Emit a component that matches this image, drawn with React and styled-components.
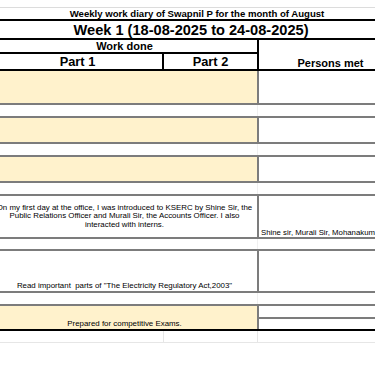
import React from "react";
import styled, { createGlobalStyle } from "styled-components";

const Global = createGlobalStyle`
  html, body {
    margin: 0;
    padding: 0;
    background: #fff;
    overflow: hidden;
  }
`;

const YELLOW = "#fff2cc";
const GRAY = "#7c7c7c";
const FAINT = "#e6e6e6";

// sheet is scrolled a little, so the first column starts off screen
const Sheet = styled.div`
  margin-left: -8px;
  width: 410px;
  padding-top: 7px;
  font-family: "Liberation Sans", Arial, sans-serif;
  color: #000;
`;

const TitleRow = styled.div`
  box-sizing: border-box;
  height: 14px;
  border-top: 1px solid #dcdcdc;
  border-bottom: 2px solid #000;
  display: flex;
  align-items: center;
  justify-content: center;
  font-size: 9.6px;
  font-weight: bold;
  white-space: nowrap;
`;

const WeekRow = styled.div`
  box-sizing: border-box;
  height: 19px;
  border-bottom: 2px solid #000;
  display: flex;
  align-items: center;
  justify-content: center;
  padding-right: 12px;
  font-size: 14.6px;
  font-weight: bold;
  white-space: nowrap;
`;

const HeadGrid = styled.div`
  box-sizing: border-box;
  display: grid;
  grid-template-columns: 265px 145px;
  height: 31px;
  border-bottom: 2px solid #000;
`;

const HeadLeft = styled.div`
  display: flex;
  flex-direction: column;
`;

const WorkDone = styled.div`
  box-sizing: border-box;
  height: 14px;
  border-bottom: 2px solid #000;
  display: flex;
  align-items: center;
  justify-content: center;
  font-size: 11px;
  font-weight: bold;
`;

const Parts = styled.div`
  flex: 1;
  display: grid;
  grid-template-columns: 171px 1fr;
`;

const PartCell = styled.div`
  display: flex;
  align-items: center;
  justify-content: center;
  font-size: 12.8px;
  font-weight: bold;
  border-left: ${(p) => (p.$divider ? "2px solid #000" : "none")};
  margin-left: ${(p) => (p.$divider ? "-1px" : "0")};
`;

const PersonsMet = styled.div`
  border-left: 2px solid #000;
  display: flex;
  align-items: flex-end;
  justify-content: center;
  font-size: 11px;
  font-weight: bold;
  line-height: 12px;
`;

const Row = styled.div`
  box-sizing: border-box;
  display: grid;
  grid-template-columns: 265px 145px;
  height: ${(p) => p.$h}px;
  border-top: ${(p) => (p.$top ? `2px solid ${GRAY}` : "none")};
  border-bottom: ${(p) => (p.$last ? "2px solid #000" : `2px solid ${GRAY}`)};
`;

const Gap = styled.div`
  display: grid;
  grid-template-columns: 265px 145px;
  height: ${(p) => p.$h}px;
`;

const GapCell = styled.div`
  border-left: ${(p) => (p.$line ? `1px solid #f0f0f0` : "none")};
`;

const WorkCell = styled.div`
  background: ${(p) => (p.$yellow ? YELLOW : "#fff")};
  display: flex;
  flex-direction: column;
  justify-content: ${(p) => (p.$middle ? "center" : "flex-end")};
  align-items: center;
  padding-bottom: ${(p) => (p.$middle ? "0" : "1px")};
  text-align: center;
  font-family: "Liberation Sans Narrow", "Liberation Sans", Arial, sans-serif;
  font-size: 7.9px;
  line-height: 8.3px;
  white-space: pre;
`;

const PeopleCell = styled.div`
  border-left: 2px solid ${GRAY};
  display: flex;
  flex-direction: column;
  justify-content: flex-end;
  padding: 0 0 0 2px;
  font-size: 7.8px;
  line-height: 9px;
  white-space: nowrap;
  overflow: hidden;
`;

const SplitCell = styled.div`
  border-left: 2px solid ${GRAY};
  display: grid;
  grid-template-rows: 11px 2px 1fr;
`;

const SplitLine = styled.div`
  background: ${GRAY};
`;

const TailRow = styled.div`
  box-sizing: border-box;
  display: grid;
  grid-template-columns: 171px 94px 145px;
  height: 12px;
  border-bottom: 1px solid ${FAINT};
`;

const TailCell = styled.div`
  border-left: ${(p) => (p.$line ? `1px solid ${FAINT}` : "none")};
`;

const rows = [
  { h: 34, yellow: true, top: false },
  { gap: 11 },
  { h: 28, yellow: true, top: true },
  { gap: 11 },
  { h: 28, yellow: true, top: true },
  { gap: 11 },
  {
    h: 45,
    top: true,
    middle: true,
    lines: [
      "On my first day at the office, I was introduced to KSERC by Shine Sir, the",
      "Public Relations Officer and Murali Sir, the Accounts Officer. I also",
      "interacted with interns.",
    ],
    people: "Shine sir, Murali Sir, Mohanakumar Sir",
  },
  { gap: 10 },
  {
    h: 44,
    top: true,
    lines: ['Read important  parts of "The Electricity Regulatory Act,2003"'],
  },
  { gap: 11 },
];

export default function App() {
  return (
    <>
      <Global />
      <Sheet>
        <TitleRow>Weekly work diary of Swapnil P for the month of August</TitleRow>
        <WeekRow>Week 1 (18-08-2025 to 24-08-2025)</WeekRow>
        <HeadGrid>
          <HeadLeft>
            <WorkDone>Work done</WorkDone>
            <Parts>
              <PartCell>Part 1</PartCell>
              <PartCell $divider>Part 2</PartCell>
            </Parts>
          </HeadLeft>
          <PersonsMet>Persons met</PersonsMet>
        </HeadGrid>

        {rows.map((r, i) =>
          r.gap ? (
            <Gap key={i} $h={r.gap}>
              <GapCell />
              <GapCell $line />
            </Gap>
          ) : (
            <Row key={i} $h={r.h} $top={r.top}>
              <WorkCell $yellow={r.yellow} $middle={r.middle}>
                {(r.lines || []).map((l) => (
                  <span key={l}>{l}</span>
                ))}
              </WorkCell>
              <PeopleCell>{r.people}</PeopleCell>
            </Row>
          )
        )}

        <Row $h={27} $top $last>
          <WorkCell $yellow>
            <span>Prepared for competitive Exams.</span>
          </WorkCell>
          <SplitCell>
            <div />
            <SplitLine />
            <div />
          </SplitCell>
        </Row>
        <TailRow>
          <TailCell />
          <TailCell $line />
          <TailCell $line />
        </TailRow>
      </Sheet>
    </>
  );
}
